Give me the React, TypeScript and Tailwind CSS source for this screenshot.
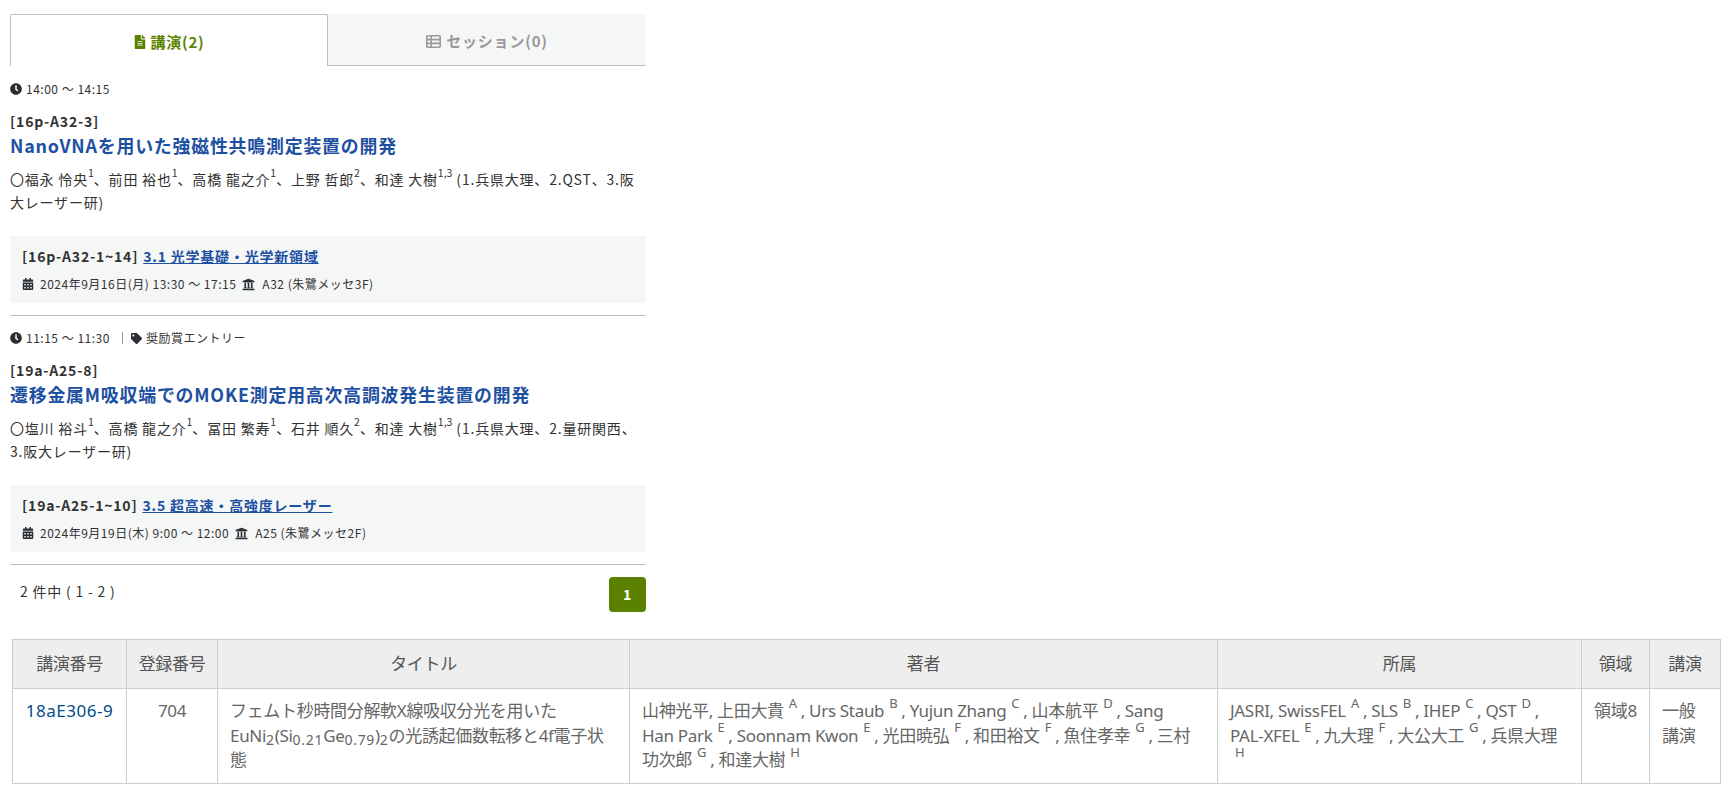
import { FaClock, FaFileAlt, FaCalendarAlt, FaUniversity, FaTag } from 'react-icons/fa'

const jp = '[font-family:"Noto_Sans_CJK_JP","Noto_Sans",sans-serif]'

function Sup({ children }: { children: React.ReactNode }) {
  return <sup className="text-[10.5px] leading-none tracking-normal [vertical-align:3px]">{children}</sup>
}

function TableIcon() {
  return (
    <svg width="15" height="13" viewBox="0 0 15 13" fill="none" stroke="#999" strokeWidth="1.6">
      <rect x="0.8" y="0.8" width="13.4" height="11.4" rx="1" />
      <path d="M5.2 1v11M1 4.6h13M1 8.4h13" />
    </svg>
  )
}

interface Talk {
  time: string
  award?: boolean
  code: string
  title: string
  authors: [string, string][]
  affil: string
  range: string
  session: string
  date: string
  room: string
}

const talks: Talk[] = [
  {
    time: '14:00 ～ 14:15',
    code: '[16p-A32-3]',
    title: 'NanoVNAを用いた強磁性共鳴測定装置の開発',
    authors: [['〇福永 怜央', '1'], ['前田 裕也', '1'], ['高橋 龍之介', '1'], ['上野 哲郎', '2'], ['和達 大樹', '1,3']],
    affil: ' (1.兵県大理、2.QST、3.阪大レーザー研)',
    range: '[16p-A32-1~14]',
    session: '3.1 光学基礎・光学新領域',
    date: '2024年9月16日(月) 13:30 ～ 17:15',
    room: 'A32 (朱鷺メッセ3F)',
  },
  {
    time: '11:15 ～ 11:30',
    award: true,
    code: '[19a-A25-8]',
    title: '遷移金属M吸収端でのMOKE測定用高次高調波発生装置の開発',
    authors: [['〇塩川 裕斗', '1'], ['高橋 龍之介', '1'], ['冨田 繁寿', '1'], ['石井 順久', '2'], ['和達 大樹', '1,3']],
    affil: ' (1.兵県大理、2.量研関西、3.阪大レーザー研)',
    range: '[19a-A25-1~10]',
    session: '3.5 超高速・高強度レーザー',
    date: '2024年9月19日(木) 9:00 ～ 12:00',
    room: 'A25 (朱鷺メッセ2F)',
  },
]

function TalkItem({ t }: { t: Talk }) {
  return (
    <div className="border-b border-[#b4c2c2] pb-[12px]">
      <div className="mt-[13px] flex h-[18px] items-center text-[12px] tracking-[0.042em] text-[#333]">
        <FaClock className="mr-[4px] text-[12px] text-[#2b2f33]" />
        <span>{t.time}</span>
        {t.award && (
          <>
            <span className="mr-[8px] ml-[12px] h-[12px] w-px bg-[#999]" />
            <FaTag className="mr-[4px] text-[11px] text-[#2b2f33]" />
            <span>奨励賞エントリー</span>
          </>
        )}
      </div>
      <div className="mt-[12px] text-[14px] leading-[22px] font-bold text-[#333]">{t.code}</div>
      <a className="mt-[1px] block text-[17.9px] leading-[25px] font-bold text-[#1e50a2]">{t.title}</a>
      <p className="mt-[10px] text-[14px] leading-[23px] text-[#333]">
        {t.authors.map(([name, n], i) => (
          <span key={name}>
            {name}
            <Sup>{n}</Sup>
            {i < t.authors.length - 1 ? '、' : ''}
          </span>
        ))}
        {t.affil}
      </p>
      <div className="mt-[22px] h-[67px] bg-[#f5f7f7] px-[12px] pt-[8px]">
        <div className="text-[14px] leading-[24px] font-bold text-[#333]">
          {t.range}
          <a className="ml-[5px] text-[#1e50a2] underline">{t.session}</a>
        </div>
        <div className="mt-[7px] flex items-center text-[12px] leading-[18px] tracking-[0.042em] text-[#333]">
          <FaCalendarAlt className="mr-[6px] text-[12px] text-[#2b2f33]" />
          <span>{t.date}</span>
          <FaUniversity className="mr-[7px] ml-[6px] text-[13px] text-[#2b2f33]" />
          <span>{t.room}</span>
        </div>
      </div>
    </div>
  )
}

const th = 'border border-[#ccc] bg-[#eee] font-normal text-[#555] text-[17px] leading-[24px] px-[10px] py-[12px] text-center'
const td = 'border border-[#ccc] text-[#666] text-[17px] leading-[24.5px] py-[10px] align-top'
const sub = 'text-[14px] tracking-[0.05em]'

function Aff({ c }: { c: string }) {
  return <sup className="mr-[4px] ml-[5px] text-[13px] leading-none [vertical-align:3px]">{c}</sup>
}

export default function App() {
  return (
    <div className={`min-h-[804px] bg-white tracking-[0.05em] ${jp}`}>
      <div className="ml-[10px] w-[636px] pt-[14px]">
        <div className="flex h-[53px] pb-[1px]">
          <div className="flex w-[318px] items-center justify-center gap-[3px] rounded-t-[2px] border border-b-0 border-[#b4c2c2] bg-white pt-[3px] text-[15px] font-bold text-[#5a8200]">
            <FaFileAlt className="text-[14px]" />
            <span>講演(2)</span>
          </div>
          <div className="flex flex-1 items-center justify-center gap-[5px] border-b border-[#b4c2c2] bg-[#f5f7f7] pt-[3px] text-[15px] font-bold text-[#999]">
            <TableIcon />
            <span>セッション(0)</span>
          </div>
        </div>
        {talks.map(t => (
          <TalkItem key={t.code} t={t} />
        ))}
        <div className="flex items-start justify-between pt-[12px]">
          <span className="mt-[2px] ml-[10px] text-[14px] leading-[24px] text-[#333]">2 件中 ( 1 - 2 )</span>
          <span className="flex h-[35px] w-[37px] items-center justify-center rounded-[4px] bg-[#5a8200] text-[14px] font-bold text-white">1</span>
        </div>
      </div>
      <table className="mt-[27px] ml-[12px] w-[1708px] table-fixed border-collapse tracking-[-0.02em] [font-family:'Noto_Sans','Noto_Sans_CJK_JP',sans-serif]">
        <colgroup>
          <col className="w-[114px]" />
          <col className="w-[91px]" />
          <col className="w-[412px]" />
          <col className="w-[588px]" />
          <col className="w-[364px]" />
          <col className="w-[68px]" />
          <col className="w-[71px]" />
        </colgroup>
        <thead>
          <tr>
            {['講演番号', '登録番号', 'タイトル', '著者', '所属', '領域', '講演'].map(h => (
              <th key={h} className={th}>{h}</th>
            ))}
          </tr>
        </thead>
        <tbody>
          <tr>
            <td className={`${td} text-center whitespace-nowrap`}><a className="tracking-[0.03em] text-[#004b87]">18aE306-9</a></td>
            <td className={`${td} text-center`}>704</td>
            <td className={`${td} pr-[14px] pl-[12px]`}>
              フェムト秒時間分解軟X線吸収分光を用いたEuNi<sub className={sub}>2</sub>(Si<sub className={sub}>0.21</sub>Ge<sub className={sub}>0.79</sub>)<sub className={sub}>2</sub>の光誘起価数転移と4f電子状態
            </td>
            <td className={`${td} pr-[20px] pl-[12px]`}>
              山神光平, 上田大貴<Aff c="A" />, Urs Staub<Aff c="B" />, Yujun Zhang<Aff c="C" />, 山本航平<Aff c="D" />, Sang Han Park<Aff c="E" />, Soonnam Kwon<Aff c="E" />, 光田暁弘<Aff c="F" />, 和田裕文<Aff c="F" />, 魚住孝幸<Aff c="G" />, 三村功次郎<Aff c="G" />, 和達大樹<Aff c="H" />
            </td>
            <td className={`${td} pr-[14px] pl-[12px]`}>
              JASRI, SwissFEL<Aff c="A" />, SLS<Aff c="B" />, IHEP<Aff c="C" />, QST<Aff c="D" />, PAL-XFEL<Aff c="E" />, 九大理<Aff c="F" />, 大公大工<Aff c="G" />, 兵県大理<Aff c="H" />
            </td>
            <td className={`${td} text-center whitespace-nowrap`}>領域8</td>
            <td className={`${td} pr-[14px] pl-[12px]`}>一般講演</td>
          </tr>
        </tbody>
      </table>
    </div>
  )
}
